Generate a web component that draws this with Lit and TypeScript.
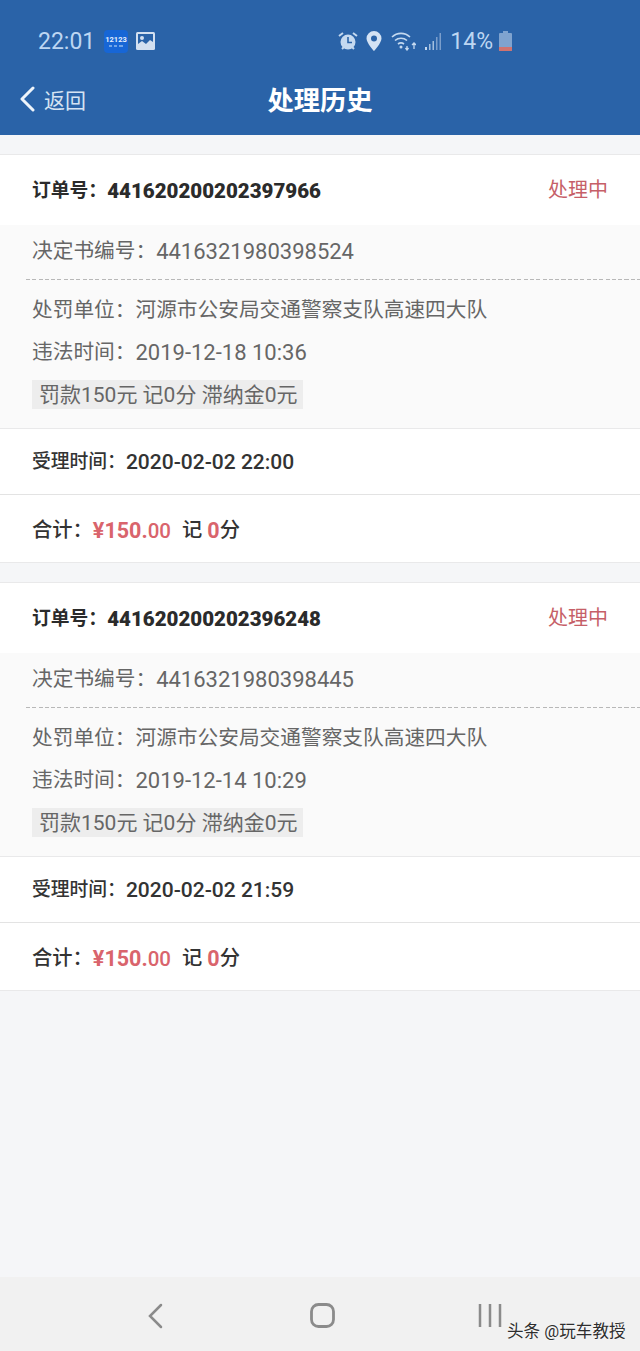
import { LitElement, html, css } from "lit";
import { customElement } from "lit/decorators.js";

const orders = [
  { no: "441620200202397966", doc: "4416321980398524", time: "2019-12-18 10:36", accepted: "2020-02-02 22:00" },
  { no: "441620200202396248", doc: "4416321980398445", time: "2019-12-14 10:29", accepted: "2020-02-02 21:59" },
];

@customElement("app-root")
export class AppRoot extends LitElement {
  static styles = css`
    :host { display: block; font-family: Roboto, "Noto Sans CJK SC", sans-serif; }
    * { box-sizing: border-box; }
    .page { height: 1351px; display: flex; flex-direction: column; background: #f5f6f8; overflow: hidden; position: relative; }
    header { height: 135px; background: #2a63a8; flex: none; }
    .status { height: 58px; margin-top: 12px; padding: 0 0 0 38px; display: flex; align-items: center; color: #bdd6f2; }
    .clock { font-size: 23px; width: 66px; }
    .app { width: 24px; height: 23px; margin-right: 8px; display: block; }
    .pic { width: 19px; height: 19px; display: block; }
    .right { margin-left: auto; display: flex; align-items: center; padding-right: 128px; }
    .pct { font-size: 23px; margin: 0 6px 0 8px; }
    .nav { height: 57px; display: grid; grid-template-columns: 1fr auto 1fr; align-items: center; color: #fff; }
    .back { display: flex; align-items: center; padding-left: 19px; gap: 9px; color: #d5e3f3; font-size: 21px; }
    .title { font-size: 26.300px; font-weight: 700; }
    main { flex: 1; padding-top: 19px; display: flex; flex-direction: column; gap: 19px; }
    .card { border-top: 1px solid #e9e9ea; border-bottom: 1px solid #e9e9ea; background: #fff; }
    .row { display: flex; align-items: center; }
    .order { height: 70px; padding: 0 32px 3px; justify-content: space-between; font-size: 18.800px; font-weight: 700; color: #2b2b2b; }
    .order b { font-size: 20.500px; }
    .st { color: #c65f68; font-size: 20px; font-weight: 400; }
    .detail { background: #fafafa; height: 204px; border-bottom: 1px solid #e9e9ea; color: #666; font-size: 20.700px; }
    .cn { vertical-align: 1px; }
    .line { padding-left: 32px; white-space: nowrap; }
    .doc { height: 55px; padding: 9px 0 0 6px; margin-left: 26px; position: relative; }
    .doc::after { content: ""; position: absolute; left: 0; right: 0; bottom: 0; height: 1px; background: repeating-linear-gradient(90deg, #b8b8b8 0 4px, transparent 4px 6.300px); }
    .doc .num, .vt .num { font-size: 22px; }
    .unit { height: 60px; display: flex; align-items: center; padding-bottom: 5px; }
    .vt { height: 25px; line-height: 25px; }
    .tag { margin: 15px 0 0 32px; width: 271px; height: 29px; background: #ededed; padding: 0 0 3px 7px; display: flex; align-items: center; font-size: 21px; white-space: nowrap; }
    .accept { height: 66px; padding: 0 32px 4px; border-bottom: 1px solid #e3e3e3; font-size: 18.800px; font-weight: 500; color: #333; }
    .accept b { font-size: 21px; font-weight: 500; }
    .total { height: 67px; padding: 0 32px 2px; font-size: 20.300px; font-weight: 500; color: #333; }
    .red { color: #d9646c; font-weight: 700; font-size: 21.500px; }
    .red small { font-size: 20.500px; font-weight: 500; }
    .mark { margin-left: 11px; }
    .bottom { flex: none; height: 74px; background: #f1f1f1; display: grid; grid-template-columns: 310px 168px 1fr; position: relative; }
    .key { display: flex; padding-top: 26px; }
    .key svg { display: block; }
    .k1 { padding-left: 147px; }
    .wm { position: absolute; left: 507px; top: 41px; font-size: 16.600px; color: #2e2e2e; text-shadow: 0 0 2px #fff; white-space: nowrap; }
  `;

  private card(o: typeof orders[number]) {
    return html`<section class="card">
      <div class="row order"><span><span class="cn">订单号：</span><b>${o.no}</b></span><span class="st">处理中</span></div>
      <div class="detail">
        <div class="line doc"><span class="cn">决定书编号：</span><span class="num">${o.doc}</span></div>
        <div class="line unit">处罚单位：河源市公安局交通警察支队高速四大队</div>
        <div class="line vt"><span class="cn">违法时间：</span><span class="num">${o.time}</span></div>
        <div class="tag">罚款150元 记0分 滞纳金0元</div>
      </div>
      <div class="row accept"><span><span class="cn">受理时间：</span><b>${o.accepted}</b></span></div>
      <div class="row total"><span><span class="cn">合计：</span><span class="red">¥150.<small>00</small></span><span class="mark"><span class="cn">记 </span><span class="red">0</span><span class="cn">分</span></span></span></div>
    </section>`;
  }

  render() {
    return html`<div class="page">
      <header>
        <div class="status">
          <span class="clock">22:01</span>
          <svg class="app" viewBox="0 0 24 23"><rect width="24" height="23" rx="4" fill="#1766d6"/><text x="12" y="12" text-anchor="middle" font-size="7.500" font-weight="700" font-family="Roboto" fill="#e6f0fc">12123</text><path d="M5 16h3M10 16h3M15 16h4" stroke="#8fbaf0" stroke-width="1.500"/></svg>
          <svg class="pic" viewBox="0 0 19 19"><rect width="19" height="18" rx="1.500" fill="#d3e0f0"/><rect x="2" y="2" width="15" height="14" fill="#2a63a8"/><path d="M2 16V12l4-3 4 3 4-4 3 2v6z" fill="#d3e0f0"/><circle cx="6" cy="6" r="2" fill="#d3e0f0"/></svg>
          <div class="right">
            <svg width="20" height="20" viewBox="0 0 20 20" style="margin-right:8px"><circle cx="10" cy="11" r="7.500" fill="#c4d9f0"/><path d="M10 6v5.500h4" fill="none" stroke="#2a63a8" stroke-width="1.600"/><path d="M1 5l4-3M19 5l-4-3M4 18l2-2M16 18l-2-2" stroke="#c4d9f0" stroke-width="2"/></svg>
            <svg width="16" height="20" viewBox="0 0 16 20" style="margin-right:9px"><path d="M8 0a7.500 7.500 0 0 1 7.500 7.500C15.500 12 8 20 8 20S.5 12 .5 7.500A7.500 7.500 0 0 1 8 0z" fill="#d3e2f4"/><circle cx="8" cy="7.500" r="3" fill="#2a63a8"/></svg>
            <svg width="25" height="20" viewBox="0 0 25 20" style="margin-right:8px"><path d="M1 6a13 13 0 0 1 18 0M4 9.500a9 9 0 0 1 12 0M7 13a5 5 0 0 1 6 0" fill="none" stroke="#c4d9f0" stroke-width="1.600"/><circle cx="10" cy="16" r="1.500" fill="#c4d9f0"/><path d="M16 15v4M23 12v6M21 14l2-2 2 2M14.500 17l1.500 2 1.500-2" fill="none" stroke="#c4d9f0" stroke-width="1.300"/></svg>
            <svg width="18" height="18" viewBox="0 0 18 18"><path d="M1 15h2v3H1z" fill="#c4d9f0"/><path d="M5 12h1.500v6H5zM8.500 9H10v9H8.500z" fill="#a3bfdf"/><path d="M12 5h1.500v13H12zM15.500 1H17v17h-1.500z" fill="#7b9ecb"/></svg>
            <span class="pct">14%</span>
            <svg width="13" height="20" viewBox="0 0 13 20"><path d="M4 0h5v2h3a1 1 0 0 1 1 1v16a1 1 0 0 1-1 1H1a1 1 0 0 1-1-1V3a1 1 0 0 1 1-1h3z" fill="#7fa3cf"/><path d="M0 16h13v3a1 1 0 0 1-1 1H1a1 1 0 0 1-1-1z" fill="#d0736f"/></svg>
          </div>
        </div>
        <div class="nav">
          <div class="back"><svg width="16" height="26" viewBox="0 0 16 26"><path d="M14 2L3 13l11 11" fill="none" stroke="#eef4fb" stroke-width="3" stroke-linecap="round" stroke-linejoin="round"/></svg>返回</div>
          <div class="title">处理历史</div>
          <div></div>
        </div>
      </header>
      <main>${orders.map((o) => this.card(o))}</main>
      <footer class="bottom">
        <div class="key k1"><svg width="16" height="26" viewBox="0 0 16 26"><path d="M14 2L3 13l11 11" fill="none" stroke="#8b8b8b" stroke-width="2.500" stroke-linecap="round"/></svg></div>
        <div class="key"><svg width="25" height="25" viewBox="0 0 25 25"><rect x="1.500" y="1.500" width="22" height="22" rx="7" fill="none" stroke="#8b8b8b" stroke-width="2.800"/></svg></div>
        <div class="key"><svg width="24" height="25" viewBox="0 0 24 25"><path d="M2 1v23M12 1v23M22 1v23" stroke="#8b8b8b" stroke-width="2.500"/></svg></div>
        <span class="wm">头条 @玩车教授</span>
      </footer>
    </div>`;
  }
}
